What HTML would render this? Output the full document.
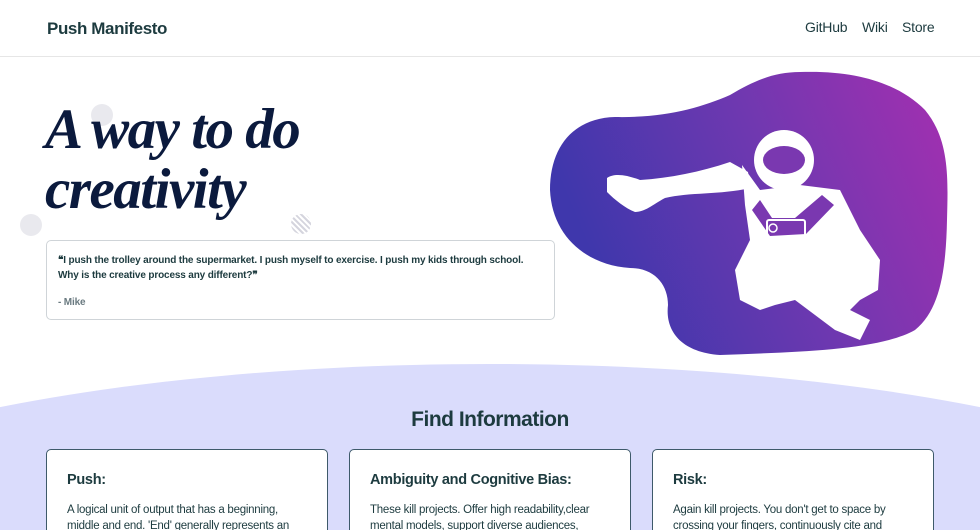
<!DOCTYPE html>
<html><head><meta charset="utf-8"><style>
*{margin:0;padding:0;box-sizing:border-box}
html,body{width:980px;height:530px;overflow:hidden}
body{background:#fff;font-family:"Liberation Sans",sans-serif;color:#1d3b3f;position:relative}
.hdr{position:absolute;left:0;top:0;width:980px;height:57px;border-bottom:1px solid #e6e6e6}
.logo{position:absolute;left:47px;top:19px;font-size:17px;font-weight:bold;letter-spacing:-0.4px}
.nav{position:absolute;top:19px;font-size:14px;letter-spacing:-0.2px}
h1{position:absolute;left:45px;top:100px;font-family:"Liberation Serif",serif;font-style:italic;font-weight:bold;font-size:57px;line-height:60px;color:#0b1a3d;letter-spacing:-1.5px;z-index:2}
.dot{position:absolute;border-radius:50%;background:#e9e9ee}
.quote{position:absolute;left:46px;top:240px;width:509px;height:80px;border:1px solid #cfd4d8;border-radius:5px;background:#fff;padding:12px 11px}
.quote p{font-size:10px;font-weight:bold;line-height:15px;color:#1d3b3f;letter-spacing:-0.15px}
.quote .m{margin-top:12px;color:#6a7a80;font-size:10px}
.wrap{position:absolute;left:0;top:364px;width:980px;height:166px;overflow:hidden}
.band{position:absolute;left:-300px;top:0;width:1580px;height:400px;border-radius:50%;background:#dadcfc}
h2{position:absolute;left:0;width:980px;top:44px;text-align:center;font-size:21px;font-weight:bold;letter-spacing:-0.5px}
.card{position:absolute;top:85px;width:282px;height:120px;background:#fff;border:1px solid #3e5a6a;border-radius:5px;padding:22px 20px}
.card h3{font-size:14.5px;font-weight:bold;margin-bottom:14px;letter-spacing:-0.3px}
.card p{font-size:11.5px;line-height:16px;color:#1d3b3f;letter-spacing:-0.25px}
</style></head><body>
<div class="hdr"><div class="logo">Push Manifesto</div>
<div class="nav" style="left:805px">GitHub</div><div class="nav" style="left:862px">Wiki</div><div class="nav" style="left:902px">Store</div></div>
<div class="dot" style="left:91px;top:104px;width:22px;height:22px"></div>
<div class="dot" style="left:20px;top:214px;width:22px;height:22px"></div>
<div style="position:absolute;left:291px;top:214px;width:20px;height:20px;border-radius:50%;background:repeating-linear-gradient(45deg,#d5d5de 0 2px,#fff 2px 4px)"></div>
<h1>A way to do<br>creativity</h1>
<div class="quote"><p>❝I push the trolley around the supermarket. I push myself to exercise. I push my kids through school. Why is the creative process any different?❞</p><p class="m">- Mike</p></div>
<svg style="position:absolute;left:0;top:0" width="980" height="360">
<defs><linearGradient id="g" x1="0" y1="0.3" x2="1" y2="0"><stop offset="0" stop-color="#3f37ac"/><stop offset="0.5" stop-color="#7038b0"/><stop offset="1" stop-color="#a52fb0"/></linearGradient></defs>
<path fill="url(#g)" d="M800,72 C860,70 900,85 925,110 C950,140 948,180 947,220 C946,270 940,310 915,330 C880,350 800,352 720,355 C680,352 665,330 668,305 C668,285 655,268 630,268 C585,265 552,235 550,190 C550,145 575,118 615,117 C665,118 700,108 730,95 C755,80 775,72 800,72Z"/>
<g fill="#fff">
<path d="M607,178 C615,172 630,176 640,180 C670,178 700,172 730,162 L748,172 L750,188 C720,195 690,192 665,198 C652,205 645,212 635,212 C625,208 615,200 607,192Z"/>
<circle cx="784" cy="160" r="30"/>
<path d="M742,165 L760,190 L800,185 L840,190 L860,230 L880,260 L878,290 L860,300 L850,310 L870,320 L860,340 L835,330 L815,315 L795,300 L775,305 L760,310 L740,300 L735,270 L750,240 L745,205Z"/>
</g>
<g fill="#7a38b0">
<ellipse cx="784" cy="160" rx="21" ry="14"/>
<path d="M760,200 L772,218 L795,218 L822,195 L834,205 L806,234 L770,236 L752,210Z"/>
</g>
<rect x="767" y="220" width="38" height="17" rx="2" fill="none" stroke="#fff" stroke-width="2"/>
<circle cx="773" cy="228" r="4" fill="none" stroke="#fff" stroke-width="1.5"/>
</svg>
<div class="wrap">
<div class="band"></div>
<h2>Find Information</h2>
<div class="card" style="left:46px"><h3>Push:</h3><p>A logical unit of output that has a beginning, middle and end. 'End' generally represents an</p></div>
<div class="card" style="left:349px"><h3>Ambiguity and Cognitive Bias:</h3><p>These kill projects. Offer high readability,clear mental models, support diverse audiences,</p></div>
<div class="card" style="left:652px"><h3>Risk:</h3><p>Again kill projects. You don't get to space by crossing your fingers, continuously cite and</p></div>
</div>
</body></html>
